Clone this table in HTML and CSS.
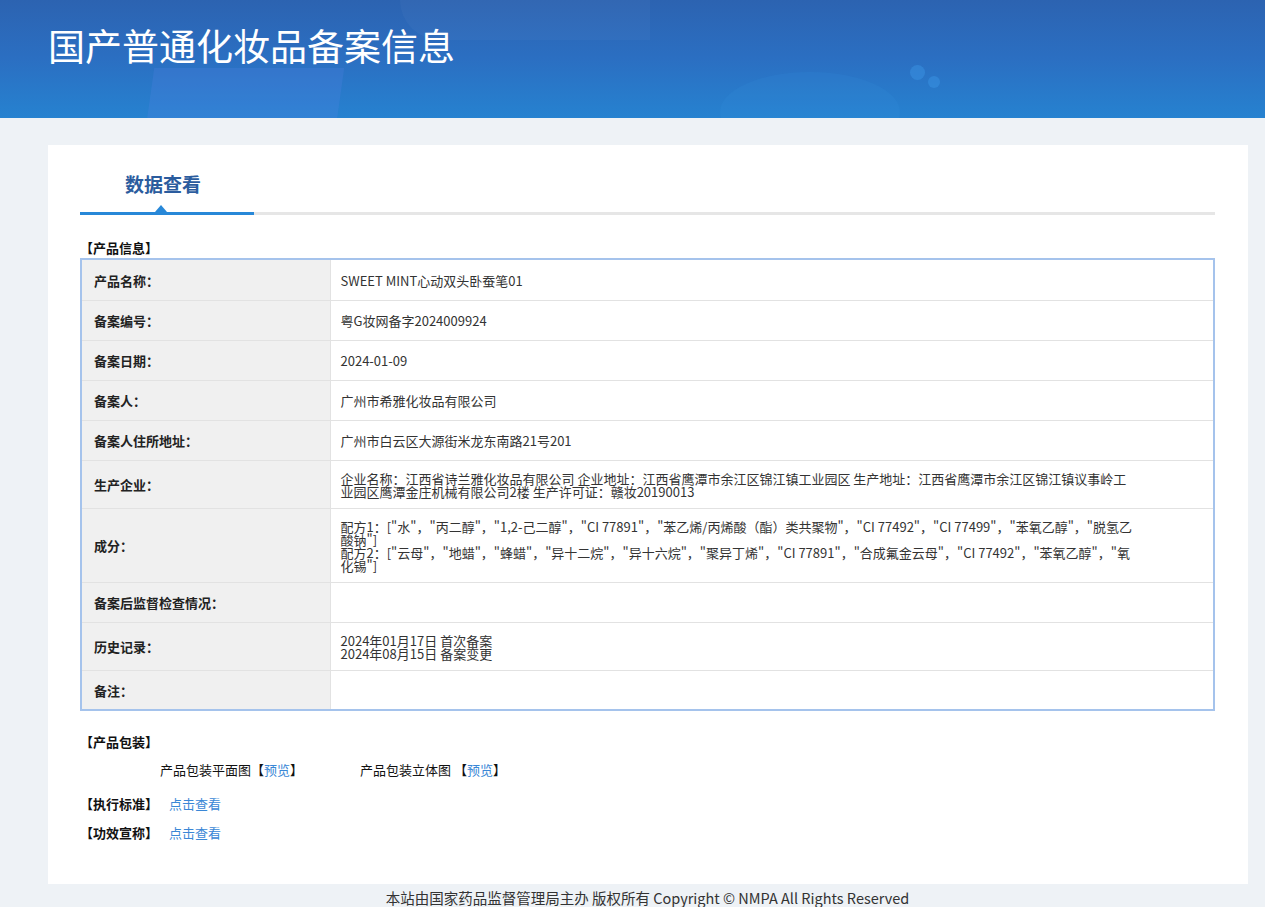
FILE: index.html
```html
<!DOCTYPE html>
<html lang="zh-CN">
<head>
<meta charset="utf-8">
<title>国产普通化妆品备案信息</title>
<link rel="stylesheet" href="styles.css">
</head>
<body>
<header class="banner">
  <div class="shape shape-a"></div>
  <div class="shape shape-b"></div>
  <div class="shape shape-c"></div>
  <div class="dot dot-1"></div>
  <div class="dot dot-2"></div>
  <h1 class="banner-title">国产普通化妆品备案信息</h1>
</header>
<main class="card">
  <div class="tabs">
    <div class="tab active">数据查看</div>
  </div>
  <h3 class="sec-title">【产品信息】</h3>
  <table class="info">
    <tr class="first"><th>产品名称：</th><td>SWEET MINT心动双头卧蚕笔01</td></tr>
    <tr><th>备案编号：</th><td>粤G妆网备字2024009924</td></tr>
    <tr><th>备案日期：</th><td>2024-01-09</td></tr>
    <tr><th>备案人：</th><td>广州市希雅化妆品有限公司</td></tr>
    <tr><th>备案人住所地址：</th><td>广州市白云区大源街米龙东南路21号201</td></tr>
    <tr><th>生产企业：</th><td>企业名称：江西省诗兰雅化妆品有限公司 企业地址：江西省鹰潭市余江区锦江镇工业园区 生产地址：江西省鹰潭市余江区锦江镇议事岭工业园区鹰潭金庄机械有限公司2楼 生产许可证：赣妆20190013</td></tr>
    <tr><th>成分：</th><td>配方1：["水"，"丙二醇"，"1,2-己二醇"，"CI 77891"，"苯乙烯/丙烯酸（酯）类共聚物"，"CI 77492"，"CI 77499"，"苯氧乙醇"，"脱氢乙酸钠"]<br>配方2：["云母"，"地蜡"，"蜂蜡"，"异十二烷"，"异十六烷"，"聚异丁烯"，"CI 77891"，"合成氟金云母"，"CI 77492"，"苯氧乙醇"，"氧化锡"]</td></tr>
    <tr><th>备案后监督检查情况：</th><td></td></tr>
    <tr><th>历史记录：</th><td>2024年01月17日 首次备案<br>2024年08月15日 备案变更</td></tr>
    <tr><th>备注：</th><td></td></tr>
  </table>
  <h3 class="sec-title pack-title">【产品包装】</h3>
  <div class="pack-row">
    <span class="pack-item">产品包装平面图【<a href="#">预览</a>】</span>
    <span class="pack-item">产品包装立体图 【<a href="#">预览</a>】</span>
  </div>
  <div class="line-row std-row"><b>【执行标准】</b><a href="#">点击查看</a></div>
  <div class="line-row claim-row"><b>【功效宣称】</b><a href="#">点击查看</a></div>
</main>
<footer class="footer">本站由国家药品监督管理局主办 版权所有 Copyright © NMPA All Rights Reserved</footer>
</body>
</html>
```
FILE: styles.css
```css
* { box-sizing: border-box; }
html, body { margin: 0; padding: 0; }
body {
  background: #eef2f6;
  font-family: "Noto Sans CJK SC", "Open Sans", sans-serif;
  color: #333;
  font-size: 13px;
}
.banner {
  position: relative;
  height: 118px;
  overflow: hidden;
  background: linear-gradient(180deg, #2c63b1 0%, #2b6fc2 50%, #2682d0 100%);
}
.shape { position: absolute; }
.shape-a {
  left: 150px; top: 68px; width: 190px; height: 60px;
  background: rgba(90, 130, 230, 0.22);
  transform: skewX(-8deg);
}
.shape-b {
  left: 400px; top: 0; width: 250px; height: 40px;
  background: rgba(255,255,255,0.03);
  border-radius: 0 0 0 80px;
}
.shape-c {
  left: 720px; top: 72px; width: 180px; height: 80px;
  border-radius: 50%;
  background: rgba(60, 160, 230, 0.12);
}
.dot { position: absolute; border-radius: 50%; background: rgba(60,150,230,0.45); }
.dot-1 { left: 910px; top: 65px; width: 15px; height: 15px; }
.dot-2 { left: 928px; top: 76px; width: 12px; height: 12px; }
.banner-title {
  position: relative;
  margin: 0;
  padding: 19px 0 0 48px;
  font-size: 37px;
  font-weight: 400;
  line-height: 52px;
  color: #fff;
}
.card {
  margin: 27px 17px 0 48px;
  background: #fff;
  padding: 0 33px 28px 32px;
  min-height: 739px;
}
.tabs {
  padding-top: 20px;
  border-bottom: 3px solid #e6e6e6;
  display: flex;
}
.tab {
  position: relative;
  width: 174px;
  height: 50px;
  padding-right: 8px;
  text-align: center;
  font-size: 19px;
  font-weight: 700;
  line-height: 38px;
  color: #2b5c9e;
  margin-bottom: -3px;
  border-bottom: 3px solid #2888d8;
}
.tab::after {
  content: "";
  position: absolute;
  left: 75px;
  bottom: 0;
  width: 0; height: 0;
  border-left: 6px solid transparent;
  border-right: 6px solid transparent;
  border-bottom: 7px solid #2888d8;
}
.sec-title {
  margin: 23px 0 0;
  font-size: 13px;
  font-weight: 700;
  line-height: 20px;
  color: #111;
}
.info {
  width: 100%;
  border-collapse: collapse;
  border: 2px solid #a5c3ec;
}
.info th, .info td {
  border-top: 1px solid #e2e2e2;
  height: 40px;
  padding: 11px 12px 10px;
  line-height: 13px;
  vertical-align: middle;
  text-align: left;
}
.info tr.first th, .info tr.first td { border-top: none; height: 41px; }
.info th {
  width: 249px;
  background: #f0f0f0;
  font-weight: 700;
  color: #222;
  border-right: 1px solid #e2e2e2;
}
.info td { padding-left: 10px; padding-right: 80px; color: #333; }
.pack-title { margin-top: 21px; }
.pack-row {
  display: flex;
  padding: 8px 0 0 80px;
  line-height: 20px;
  color: #111;
}
.pack-item { width: 200px; }
a { color: #3a87d6; text-decoration: none; }
.line-row {
  line-height: 16px;
  color: #111;
}
.std-row { margin-top: 16px; }
.claim-row { margin-top: 13px; }
.line-row b { margin-right: 11px; }
.footer {
  text-align: center;
  font-size: 14.5px;
  line-height: 28px;
  color: #333;
  padding-left: 30px;
}
```
